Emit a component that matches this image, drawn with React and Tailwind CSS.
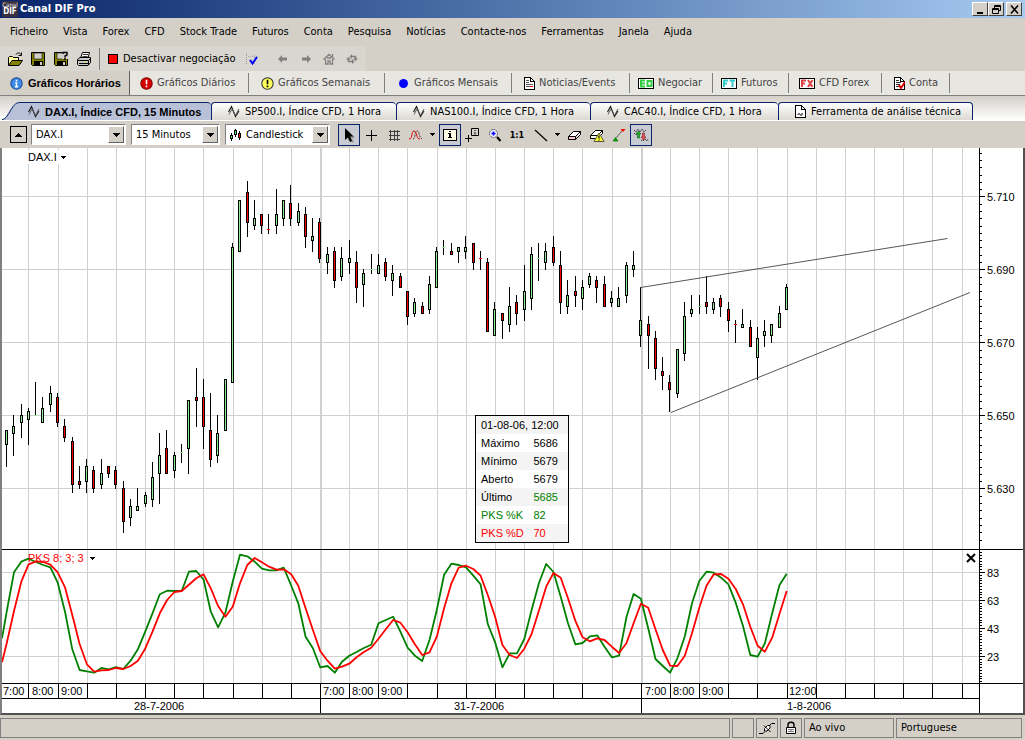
import { clsx } from "clsx";

const menu = [
  "Ficheiro", "Vista", "Forex", "CFD", "Stock Trade", "Futuros", "Conta",
  "Pesquisa", "Notícias", "Contacte-nos", "Ferramentas", "Janela", "Ajuda",
];

// [high, low, body top, body bottom, up], in points below 5670
const candles = [
  [24, 34, 24, 28, 1], [20, 31, 23, 25, 1], [17, 26, 20, 22, 1], [18, 28, 19, 21, 1],
  [11, 20, 20, 20, 1], [15, 22, 18, 22, 1], [12, 19, 14, 17, 1], [14, 23, 15, 22, 0],
  [21, 27, 23, 26, 0], [26, 41, 27, 39, 0], [34, 40, 38, 39, 0], [32, 41, 34, 38, 1],
  [34, 41, 35, 40, 0], [32, 40, 36, 39, 1], [34, 37, 34, 36, 0], [34, 40, 35, 39, 0],
  [38, 52, 40, 49, 0], [43, 50, 45, 48, 1], [40, 46, 45, 46, 1], [41, 45, 42, 44, 1],
  [33, 45, 37, 43, 1], [25, 44, 31, 36, 1], [24, 36, 29, 36, 0], [30, 37, 31, 35, 1],
  [28, 33, 30, 30, 1], [16, 36, 16, 29, 1], [7, 23, 15, 16, 0], [10, 29, 15, 23, 0],
  [14, 34, 24, 32, 0], [20, 33, 25, 31, 1], [10, 24, 10, 24, 1], [-27, 11, -26, 11, 1],
  [-39, -25, -39, -25, 1], [-44, -29, -41, -33, 0], [-39, -31, -34, -32, 1], [-35, -30, -35, -32, 0],
  [-35, -30, -31, -31, 0], [-42, -30, -35, -32, 1], [-39, -32, -39, -34, 1], [-43, -32, -38, -34, 0],
  [-38, -32, -36, -33, 1], [-37, -26, -35, -29, 0], [-34, -25, -29, -28, 1], [-34, -22, -33, -23, 0],
  [-26, -19, -24, -22, 1], [-26, -15, -25, -17, 0], [-26, -17, -23, -18, 1], [-28, -19, -23, -22, 1],
  [-25, -11, -22, -15, 0], [-20, -10, -19, -16, 1], [-24, -19, -20, -20, 1], [-24, -19, -21, -19, 1],
  [-23, -17, -22, -18, 0], [-21, -13, -19, -17, 1], [-19, -15, -18, -15, 0], [-14, -5, -14, -7, 0],
  [-12, -7, -11, -8, 1], [-11, -8, -10, -8, 0], [-18, -8, -16, -9, 1], [-26, -15, -25, -15, 1],
  [-28, -24, -26, -26, 1], [-27, -24, -25, -24, 0], [-26, -22, -26, -25, 1], [-29, -23, -26, -25, 1],
  [-27, -20, -27, -22, 0], [-25, -20, -23, -23, 0], [-23, -3, -22, -3, 0], [-11, -2, -9, -2, 1],
  [-8, -1, -8, -6, 0], [-15, -3, -10, -5, 1], [-13, -5, -11, -8, 0], [-21, -6, -14, -9, 1],
  [-26, -9, -24, -12, 1], [-27, -17, -23, -23, 1], [-27, -20, -25, -22, 1], [-29, -21, -26, -22, 0],
  [-25, -8, -21, -11, 0], [-17, -8, -13, -10, 1], [-18, -10, -14, -13, 0], [-17, -9, -15, -12, 1],
  [-19, -15, -18, -16, 1], [-18, -11, -17, -15, 0], [-18, -10, -16, -10, 0], [-14, -10, -12, -11, 1],
  [-15, -10, -12, -10, 1], [-22, -11, -21, -13, 1], [-25, -18, -21, -20, 1], [-15, 1, -6, -2, 1],
  [-7, 7, -5, -2, 0], [-3, 10, -1, 7, 0], [4, 13, 8, 9, 0], [9, 19, 11, 13, 0],
  [2, 15, 2, 14, 1], [-11, 5, -7, 3, 1], [-13, -7, -9, -8, 1], [-13, -8, -10, -10, 1],
  [-18, -8, -11, -10, 0], [-12, -8, -11, -9, 1], [-13, -7, -12, -10, 0], [-11, -3, -9, -6, 0],
  [-6, 0, -5, -5, 0], [-9, -4, -5, -4, 1], [-6, 1, -4, 1, 0], [-4, 10, -1, 4, 1],
  [-6, 1, -3, -2, 1], [-5, 0, -5, -2, 1], [-10, -4, -8, -4, 1], [-16, -9, -15, -9, 1],
];

// PKS lines, thirds of a pixel below the panel top
const pksK = [
  215, 97, 65, 56, 66, 75, 82, 128, 215, 328, 390, 394, 398, 384, 388, 381, 387, 362, 328, 275,
  220, 163, 152, 153, 153, 95, 93, 118, 215, 262, 218, 125, 44, 49, 65, 86, 91, 91, 83, 135,
  190, 290, 325, 382, 378, 398, 365, 347, 336, 324, 314, 250, 240, 230, 275, 323, 347, 363, 300, 210,
  104, 71, 75, 82, 107, 133, 252, 307, 382, 340, 340, 297, 210, 130, 72, 96, 170, 250, 313, 309,
  289, 286, 320, 352, 347, 232, 162, 176, 265, 357, 378, 398, 355, 290, 190, 123, 95, 98, 113, 133,
  188, 258, 345, 350, 310, 220, 136, 101,
];
const pksD = [
  310, 213, 125, 73, 64, 66, 74, 97, 142, 225, 312, 373, 395, 391, 390, 384, 387, 378, 362, 326,
  275, 220, 180, 156, 153, 134, 115, 103, 145, 198, 230, 200, 130, 75, 54, 67, 80, 89, 88, 102,
  137, 205, 270, 333, 362, 386, 380, 371, 352, 336, 323, 296, 268, 240, 248, 277, 313, 345, 337, 290,
  205, 130, 83, 77, 87, 107, 165, 230, 315, 345, 354, 326, 282, 212, 140, 99, 113, 175, 242, 292,
  304, 295, 300, 320, 339, 310, 250, 191, 203, 268, 330, 377, 378, 348, 280, 203, 137, 103, 102, 116,
  147, 193, 260, 317, 335, 293, 223, 153,
];

const candleX = (i) => Math.round(4 + i * 7.29);
const priceY = (d) => Math.round(194 + d * 3.65);
const hours = Array.from({ length: 33 }, (_, k) => Math.floor(26.9 + k * 29.16));
const toPoints = (list, first) =>
  `0,${392 + first / 3} ` +
  list.map((v, i) => `${(4.7 + i * 7.29).toFixed(1)},${(392 + v / 3).toFixed(1)}`).join(" ");

const Caret = ({ className }) => (
  <svg width="7" height="4" viewBox="0 0 7 4" shapeRendering="crispEdges" className={className} aria-hidden="true">
    <path d="M0 0h7v1H6v1H5v1H4v1H3V3H2V2H1V1H0z" fill="currentColor" />
  </svg>
);

const Icon = ({ children, size = 16, className }) => (
  <svg width={size} height={size} viewBox="0 0 16 16" fill="none" className={clsx("shrink-0", className)} aria-hidden="true">
    {children}
  </svg>
);

const FolderIcon = () => (
  <Icon>
    <path d="M1.5 14V6.500l1-1h3l1 1h5V9" fill="#ffff9c" stroke="#000" />
    <path d="M1.500 14.500 5 9.500h10.500L12 14.500z" fill="#848200" stroke="#000" />
    <path d="M9 3.500c1-2 4-2 5 0M14.500 1.500v3h-3" stroke="#000" />
  </Icon>
);

const DiskIcon = ({ ask }) => (
  <Icon>
    <path d="M1.500 1.500h13v13h-12l-1-1z" fill="#848200" stroke="#000" />
    <path d="M4 2h8v6H4z" fill="#d4d0c8" stroke="#000" strokeWidth=".6" />
    <path d="M4 10h9v4.500H4z" fill="#000" />
    <path d="M10 11h2v3h-2z" fill="#d4d0c8" />
    {ask && (
      <>
        <path d="M9 0h7v8H9z" fill="#d4d0c8" />
        <path d="M10 3V1.500h4V4l-2 1v1.500M11 8h2" stroke="#000" strokeWidth="1.400" />
      </>
    )}
  </Icon>
);

const PrinterIcon = () => (
  <Icon>
    <path d="M4.500 7 6.500 1.500h7L12 7" fill="#fff" stroke="#000" />
    <path d="M7 3.500h5M6.500 5.500h5" stroke="#000" strokeWidth=".8" />
    <path d="M1.500 8.500 4 6.500h10.500v5L12 14.500H2.500l-1-1z" fill="#c8c8c8" stroke="#000" />
    <path d="M1.500 9.500h11l2-2M3 12.500h9M12.500 10v4" stroke="#000" />
    <path d="M8 11h2" stroke="#e8e800" />
  </Icon>
);

const Badge = ({ fill, fg, stroke, info }) => (
  <Icon size={13}>
    <circle cx="8" cy="8" r="7" fill={fill} stroke={stroke} strokeWidth="1.300" />
    {info ? (
      <path d="M8 3.500v2M6.500 7.500H8V12M6 12h4" stroke={fg} strokeWidth="1.800" />
    ) : (
      <path d="M8 3.500v5.500M8 10.500v2" stroke={fg} strokeWidth="2" />
    )}
  </Icon>
);

const PageIcon = ({ children }) => (
  <svg width="11" height="13" viewBox="0 0 11 13" fill="none" shapeRendering="crispEdges" className="shrink-0" aria-hidden="true">
    <path d="M.5.500h6l4 4v8H.500z" fill="#fff" stroke="#000" />
    <path d="M6.500.500v4h4" stroke="#000" />
    {children}
  </svg>
);

const Ticket = ({ color, children }) => (
  <span className="flex h-[11px] w-4 items-center justify-center border border-black bg-white">
    <svg width="14" height="9" viewBox="0 0 14 9" fill="none" stroke={color} strokeWidth="2" aria-hidden="true">
      {children}
    </svg>
  </span>
);

const ZigzagIcon = () => (
  <svg width="12" height="13" viewBox="0 0 12 13" fill="none" className="shrink-0" aria-hidden="true">
    <path d="M.5 7 3.500 1.500l4 10L11 6" stroke="#111" strokeWidth="1.100" />
    <path d="M1 9.500 4 4l3.500 6.500L11 4" stroke="#555" />
  </svg>
);

const workspaces = [
  { label: "Gráficos Diários", width: "w-[119px] pl-2.5", icon: <Badge fill="#d40000" stroke="#800" fg="#fff" /> },
  { label: "Gráficos Semanais", width: "w-[136px] pl-3", icon: <Badge fill="#ffff60" stroke="#333" fg="#000" /> },
  {
    label: "Gráficos Mensais",
    width: "w-[127px] pl-3",
    icon: (
      <Icon size={13}>
        <circle cx="8" cy="8" r="5.500" fill="#00f" />
      </Icon>
    ),
  },
  {
    label: "Noticias/Events",
    width: "w-[118px] pl-3",
    icon: (
      <PageIcon>
        <path d="M2 3.500h3M2 5.500h3M2 7.500h7M2 9.500h4" stroke="#555" />
        <path d="M6 9.500h3" stroke="#e00" />
      </PageIcon>
    ),
  },
  {
    label: "Negociar",
    width: "w-[83px] pl-2",
    icon: (
      <Ticket color="#3c4">
        <path d="M6 1.500H2v6h4M2 4.500h4M8.500 2h4v5h-4z" />
      </Ticket>
    ),
  },
  {
    label: "Futuros",
    width: "w-[76px] pl-2",
    icon: (
      <Ticket color="#3cc">
        <path d="M6 1.500H2V8M2 4.500h3M7.500 1.500H13M10.500 1v7" />
      </Ticket>
    ),
  },
  {
    label: "CFD Forex",
    width: "w-[93px] pl-2.5",
    icon: (
      <Ticket color="#d44">
        <path d="M6 1.500H2V8M2 4.500h3M8 1l4.500 7M12.500 1 8 8" />
      </Ticket>
    ),
  },
  {
    label: "Conta",
    width: "w-[68px] pl-3",
    icon: (
      <PageIcon>
        <path d="M2 3.500h3M2 5.500h5M2 7.500h4M2 9.500h3" stroke="#333" />
        <path d="m5 8 2 3 4-6" stroke="#d00" strokeWidth="2" shapeRendering="auto" />
      </PageIcon>
    ),
  },
];

const documents = [
  { label: "SP500.I, Índice CFD, 1 Hora", width: "w-[185px]" },
  { label: "NAS100.I, Índice CFD, 1 Hora", width: "w-[194px]" },
  { label: "CAC40.I, Índice CFD, 1 Hora", width: "w-[188px]" },
  { label: "Ferramenta de análise técnica", width: "w-[195px]", page: true },
];

const WindowButton = ({ label, children }) => (
  <button
    type="button"
    aria-label={label}
    className="flex h-3.5 w-4 items-center justify-center border border-t-white border-r-[#404040] border-b-[#404040] border-l-white bg-[#d4d0c8]"
  >
    <svg width="13" height="12" viewBox="0 0 13 12" fill="none" aria-hidden="true">
      {children}
    </svg>
  </button>
);

const TitleBar = () => (
  <header className="flex h-[18px] items-center bg-linear-to-r from-[#0a246a] to-[#a6caf0] pr-[3px] pl-0.5">
    <span className="flex h-4 w-4 flex-col justify-center bg-[#3a3040] text-center text-[6px] leading-[6px] text-white">
      <span>Canal</span>
      <span className="text-[8px] leading-[8px] font-bold">DIF</span>
    </span>
    <h1 className="ml-0.5 grow text-[11px] font-bold text-white">Canal DIF Pro</h1>
    <WindowButton label="Minimizar">
      <path d="M3 9h6v2H3z" fill="#000" />
    </WindowButton>
    <WindowButton label="Restaurar">
      <path d="M4.500 5V2.500h6v5H8M4 3.500h7M2.500 5.500h6v5h-6zM2 6.500h7" stroke="#000" />
    </WindowButton>
    <span className="w-0.5" />
    <WindowButton label="Fechar">
      <path d="m3 2.500 7 8M10 2.500l-7 8" stroke="#000" strokeWidth="1.600" />
    </WindowButton>
  </header>
);

const MainToolbar = () => (
  <div className="flex h-[25px] w-[366px] items-center bg-[#d9d6cf] pl-[7px]">
    <button type="button" aria-label="Abrir"><FolderIcon /></button>
    <button type="button" aria-label="Guardar" className="ml-[7px]"><DiskIcon /></button>
    <button type="button" aria-label="Guardar como" className="ml-[7px]"><DiskIcon ask /></button>
    <button type="button" aria-label="Imprimir" className="ml-[7px]"><PrinterIcon /></button>
    <span className="ml-[7px] h-[22px] w-px bg-[#808080]" />
    <button type="button" className="ml-2 flex w-[137px] items-center gap-[5px] whitespace-nowrap">
      <span className="h-2.5 w-2.5 border border-black bg-[#f00]" />
      Desactivar negociação
    </button>
    <button type="button" aria-label="Validar">
      <Icon>
        <path d="M1.500 2v12" stroke="#999" strokeDasharray="1 1" />
        <path d="M3 5.500h10M9.500 4v9" stroke="#aaa" strokeDasharray="1 1" />
        <path d="m5 9 2.500 3.500L12 6" stroke="#00f" strokeWidth="2" />
      </Icon>
    </button>
    <div className="ml-3.5 flex items-center gap-[7px]">
      <button type="button" aria-label="Anterior">
        <Icon><path d="m3 8 4-4v2.500h5v3H7V12z" fill="#808080" /></Icon>
      </button>
      <button type="button" aria-label="Seguinte">
        <Icon><path d="M13 8 9 4v2.500H4v3h5V12z" fill="#808080" /></Icon>
      </button>
      <button type="button" aria-label="Início">
        <Icon><path d="m2.500 8.500 5.500-5 5.500 5M4.500 8v5h2.500v-3h2v3h2.500V8M6 7h4M11.500 3v3" stroke="#808080" strokeWidth="1.300" /></Icon>
      </button>
      <button type="button" aria-label="Actualizar">
        <Icon>
          <path d="M7 5.500h4.500V8M9 10.500H4.500V8" stroke="#808080" strokeWidth="1.600" />
          <path d="M9 7.500h5L11.500 10zM2 8.500h5L4.500 6zM8 3v5L5.500 5.500zM8 8v5l2.500-2.500z" fill="#808080" />
        </Icon>
      </button>
    </div>
  </div>
);

const WorkspaceTabs = () => (
  <nav className="flex h-[25px] border-b border-[#808080] bg-[#e8e6e1] text-[#444]">
    <a
      href="#horarios"
      className="flex w-[130px] items-center gap-[5px] border-r border-[#606060] bg-[#d4d0c8] pl-2.5 font-['Liberation_Sans',sans-serif] font-bold whitespace-nowrap text-black"
    >
      <Badge info fill="#3c8ce8" stroke="#1c4c98" fg="#fff" />
      Gráficos Horários
    </a>
    {workspaces.map((item) => (
      <a
        key={item.label}
        href="#ws"
        className={clsx("my-0.5 flex items-center gap-1 border-r border-[#808080] whitespace-nowrap", item.width)}
      >
        {item.icon}
        {item.label}
      </a>
    ))}
  </nav>
);

const DocumentTabs = () => (
  <nav className="flex h-[25px] items-end border-b border-white bg-linear-to-b from-[#d4d0c8] to-white pl-0.5">
    <svg width="18" height="18" viewBox="0 0 18 18" fill="none" aria-hidden="true">
      <path d="M0 18c5 0 8-17.500 18-17.500V18z" fill="#b8c1d8" />
      <path d="M0 17.500c3 0 5-3 8-8s5-9 10-9" stroke="#0a246a" />
    </svg>
    <a
      href="#dax"
      className="flex h-[18px] w-[191px] items-center gap-[5px] rounded-tr border-t border-[#0a246a] bg-[#b8c1d8] pl-2 font-['Liberation_Sans',sans-serif] font-bold whitespace-nowrap text-black"
    >
      <ZigzagIcon />
      DAX.I, Índice CFD, 15 Minutos
    </a>
    {documents.map((item) => (
      <a
        key={item.label}
        href="#doc"
        className={clsx(
          "flex h-[18px] items-center gap-[5px] rounded-t border-t border-l border-[#0a246a] bg-linear-to-b from-white to-[#dcd9d2] pl-4 whitespace-nowrap last:border-r",
          item.width,
        )}
      >
        {item.page ? (
          <PageIcon>
            <path d="M2 9.500h1v-1h1v1h1v1h1v-2h1v1h1" stroke="#777" />
          </PageIcon>
        ) : (
          <ZigzagIcon />
        )}
        {item.label}
      </a>
    ))}
  </nav>
);

const Combo = ({ label, value, className, children }) => (
  <div className={clsx("relative h-[21px] border border-t-[#808080] border-r-white border-b-white border-l-[#808080] bg-white", className)}>
    <select
      aria-label={label}
      className={clsx("h-full w-full appearance-none outline-none", children ? "pl-5" : "pl-1")}
    >
      <option>{value}</option>
    </select>
    {children}
    <span className="pointer-events-none absolute inset-y-px right-px flex w-4 items-center justify-center border border-t-white border-r-[#606060] border-b-[#606060] border-l-white bg-[#d4d0c8]">
      <Caret />
    </span>
  </div>
);

const Tool = ({ label, active, width = "w-[22px]", children }) => (
  <button
    type="button"
    aria-label={label}
    className={clsx(
      "flex h-[22px] items-center justify-center border",
      width,
      active ? "border-[#0a246a] bg-[#c9cbd2]" : "border-transparent",
    )}
  >
    {children}
  </button>
);

const ChartToolbar = () => (
  <div className="flex h-[27px] items-center pl-2.5">
    <button type="button" aria-label="Recolher" className="flex h-[17px] w-[17px] items-center justify-center border border-black">
      <Caret className="rotate-180" />
    </button>
    <Combo label="Símbolo" value="DAX.I" className="ml-1 w-[95px]" />
    <Combo label="Intervalo" value="15 Minutos" className="ml-[5px] w-[89px]" />
    <Combo label="Tipo" value="Candlestick" className="ml-[5px] w-[105px]">
      <svg width="12" height="12" viewBox="0 0 12 12" shapeRendering="crispEdges" className="pointer-events-none absolute top-1 left-1" aria-hidden="true">
        <path d="M1 4h1v8H1zM5 0h1v8H5zM9 2h1v9H9z" />
        <path d="M0 6h3v4H0zM4 1h3v5H4zM8 4h3v5H8z" />
        <path d="M1 7h1v2H1zM5 2h1v3H5z" fill="#6e6" />
        <path d="M9 5h1v3H9z" fill="#f00" />
      </svg>
    </Combo>
    <div className="ml-2 flex items-center">
      <Tool label="Seleccionar" active>
        <Icon>
          <path d="M7 3v11l2-2 2 4 2-1-2-4h3z" fill="#999" />
          <path d="M4 1v12l3-2.500 2 4.500 2-1-2-4.500h3.500z" fill="#000" />
        </Icon>
      </Tool>
      <Tool label="Cruz"><Icon><path d="M8.500 3v11M3 8.500h11" stroke="#000" /></Icon></Tool>
      <Tool label="Grelha"><Icon><path d="M5.500 3v11M9.500 3v11M12.500 3v11M4 4.500h11M4 8.500h11M4 12.500h11" stroke="#333" strokeWidth=".9" /></Icon></Tool>
      <Tool label="Indicadores">
        <Icon>
          <path d="M2 12c4 0 2-8 5-8s2 8 6 8" stroke="#d00" />
          <path d="M6 12c3 0 1-8 4-8s1 5 5 8" stroke="#633" strokeDasharray="2 1" />
        </Icon>
      </Tool>
      <Tool label="Mais indicadores" width="w-[13px]"><Caret className="h-[3px] w-[5px]" /></Tool>
      <Tool label="Informação" active>
        <svg width="14" height="12" viewBox="0 0 14 12" fill="none" shapeRendering="crispEdges" aria-hidden="true">
          <path d="M.5.500h13v11H.500z" fill="#ffffe8" stroke="#000" />
          <path d="M6 2h2v1H6zM5 4h3v4h1v1H5V8h1V5H5z" fill="#000" />
        </svg>
      </Tool>
      <Tool label="Etiqueta">
        <Icon>
          <path d="M7.500 1.500h7v7h-7zM4.500 8v7M1 11.500h7" stroke="#000" />
          <path d="M10.500 3h1v1h-1zM10.500 5h1v2.500h-1z" fill="#000" />
        </Icon>
      </Tool>
      <Tool label="Ampliar">
        <Icon>
          <circle cx="7.500" cy="6.500" r="4" fill="#eef" stroke="#555" strokeDasharray="2 .6" />
          <path d="M7.500 4.500v4M5.500 6.500h4" stroke="#00f" strokeWidth="1.500" />
          <path d="m11 10 3.500 4" stroke="#000" strokeWidth="2" />
        </Icon>
      </Tool>
      <Tool label="Escala real" width="w-6"><span className="text-[9px] font-bold">1:1</span></Tool>
      <Tool label="Linha"><Icon><path d="m3 3 12 11" stroke="#000" strokeWidth="1.200" /></Icon></Tool>
      <Tool label="Mais linhas" width="w-[13px]"><Caret className="h-[3px] w-[5px]" /></Tool>
      <Tool label="Apagar">
        <Icon>
          <path d="m1.500 9.500 5-5h7l-5 5zM1.500 9.500v3h7v-3M8.500 12.500l5-5v-3" fill="#fff" stroke="#000" />
          <path d="M2 10h6v2H2z" fill="#f8c8d8" />
        </Icon>
      </Tool>
      <Tool label="Apagar tudo">
        <Icon>
          <path d="m1.500 8.500 5-5h7l-5 5zM1.500 8.500v3h7v-3M8.500 11.500l5-5v-3" fill="#fff" stroke="#000" />
          <path d="m10 6 5 8.500H5z" fill="#ffff30" stroke="#554" />
          <path d="M10 8.500v3M10 12.500v1" stroke="#000" strokeWidth="1.200" />
        </Icon>
      </Tool>
      <Tool label="Tendência">
        <Icon>
          <path d="m4 12 8-9" stroke="#333" strokeDasharray="2 .8" />
          <path d="M9.500 2h5L12 5z" fill="#f00" />
          <path d="M2 14h5l-2.500-3.500z" fill="#0a0" stroke="#060" strokeWidth=".6" />
        </Icon>
      </Tool>
      <Tool label="Posições" active>
        <Icon>
          <path d="m1 3 2 2 2-3 2 3 2-3 2 3 2-2M1 6l2 2 2-3M8 13l2 1 2-2 2 2 1-2" stroke="#333" strokeDasharray="1.500 .8" />
          <path d="m5.500 4 2.500 3H6.500v4h-2V7H3z" fill="#2b2" stroke="#040" strokeWidth=".5" />
          <path d="m10.500 13 2.500-3h-1.500V6h-2v4H8z" fill="#e55" stroke="#600" strokeWidth=".5" />
        </Icon>
      </Tool>
    </div>
  </div>
);

const Plot = () => (
  <svg className="h-full w-full" fontSize="11" role="img" aria-label="DAX.I, 15 Minutos">
    <g shapeRendering="crispEdges">
      {hours.map((x, k) => (
        <rect key={x} x={x} y="0" width={k === 10 || k === 21 ? 2 : 1} height="535" fill="#d0d0d0" />
      ))}
      {[48, 121, 194, 267, 340, 424, 452, 480, 508].map((y) => (
        <rect key={y} x="0" y={y} width="100%" height="1" fill="#d0d0d0" />
      ))}
      {candles.map(([high, low, top, bottom, up], i) => {
        const x = candleX(i);
        const flat = top === bottom;
        const h = priceY(bottom) - priceY(top);
        return (
          <g key={i}>
            <rect x={x} y={priceY(high)} width="1" height={priceY(low) - priceY(high) + 1} />
            {flat ? (
              <rect x={x - 1} y={priceY(top)} width="3" height="1" fill={up ? "#90ee90" : "#f00"} />
            ) : (
              <>
                <rect x={x - 1} y={priceY(top)} width="3" height={h + 1} />
                <rect x={x} y={priceY(top) + 1} width="1" height={h - 1} fill={up ? "#90ee90" : "#f00"} />
              </>
            )}
          </g>
        );
      })}
    </g>
    <path d="M638.500 139.500 945.500 90.500M669 264.500 968 144.500" stroke="#444" strokeWidth=".9" fill="none" />
    <g fill="none" strokeWidth="1.800" strokeLinejoin="round">
      <polyline points={toPoints(pksK, 295)} stroke="#008000" />
      <polyline points={toPoints(pksD, 367)} stroke="#f00" />
    </g>
    <g shapeRendering="crispEdges">
      <rect x="0" y="401" width="100%" height="1" />
      <rect x="0" y="535" width="100%" height="1" />
      <rect x="0" y="550" width="100%" height="1" />
      {hours.map((x, k) => (
        <rect key={x} x={x} y="535" width="1" height={k === 10 || k === 21 ? 30 : 15} />
      ))}
    </g>
    {[
      [1, "7:00"], [30, "8:00"], [59, "9:00"], [321, "7:00"], [350, "8:00"], [379, "9:00"],
      [643, "7:00"], [671, "8:00"], [700, "9:00"], [787, "12:00"],
    ].map(([x, text]) => (
      <text key={x} x={x} y="547">{text}</text>
    ))}
    <text x="132" y="562">28-7-2006</text>
    <text x="452" y="562">31-7-2006</text>
    <text x="785" y="562">1-8-2006</text>
  </svg>
);

const Scale = () => (
  <svg className="h-[565px] w-11 shrink-0" fontSize="11" aria-hidden="true">
    <g shapeRendering="crispEdges">
      <rect x="0" y="0" width="1" height="565" />
      <rect x="0" y="401" width="100%" height="1" />
      <rect x="0" y="535" width="100%" height="1" />
      {Array.from({ length: 54 }, (_, i) => (
        <rect key={i} x="1" y={Math.round(4.600 + i * 7.3)} width="2" height="1" />
      ))}
      {Array.from({ length: 47 }, (_, i) => (
        <rect key={i} x="1" y={Math.round(404.400 + i * 2.8)} width="2" height="1" />
      ))}
      {[48, 121, 194, 267, 340, 424, 452, 480, 508].map((y) => (
        <rect key={y} x="1" y={y} width="5" height="1" />
      ))}
    </g>
    {["5.710", "5.690", "5.670", "5.650", "5.630"].map((text, i) => (
      <text key={text} x="8" y={53 + i * 73}>{text}</text>
    ))}
    {["83", "63", "43", "23"].map((text, i) => (
      <text key={text} x="8" y={429 + i * 28}>{text}</text>
    ))}
  </svg>
);

const quote = [
  ["Máximo", "5686"],
  ["Mínimo", "5679"],
  ["Aberto", "5679"],
  ["Último", "5685", "", "text-[#008000]"],
  ["PKS %K", "82", "text-[#008000]", "text-[#008000]"],
  ["PKS %D", "70", "text-[#f00]", "text-[#f00]"],
];

const QuoteBox = () => (
  <table className="absolute top-[267px] left-[473px] h-32 w-[94px] border border-black bg-white">
    <tbody>
      <tr className="bg-[#f4f4f4]">
        <td colSpan={2} className="pl-[5px] whitespace-nowrap">01-08-06, 12:00</td>
      </tr>
      {quote.map(([name, value, nameColor, valueColor]) => (
        <tr key={name} className="even:bg-white odd:bg-[#f4f4f4]">
          <th scope="row" className={clsx("w-[58px] pl-[5px] text-left font-normal whitespace-nowrap", nameColor)}>{name}</th>
          <td className={valueColor}>{value}</td>
        </tr>
      ))}
    </tbody>
  </table>
);

const Chart = () => (
  <main className="flex border-r-2 border-b-2 border-l-2 border-r-[#505050] border-b-[#505050] border-l-[#808080] bg-white font-['Liberation_Sans',Arial,sans-serif] text-[11px] leading-[14px]">
    <div className="relative h-[565px] min-w-0 grow">
      <Plot />
      <button type="button" className="absolute top-0.5 left-[26px] flex items-center gap-1 bg-white pr-2">
        DAX.I
        <Caret className="h-[3px] w-[5px]" />
      </button>
      <button type="button" className="absolute top-[403px] left-[26px] flex items-center gap-1.5 text-[#f00]">
        PKS 8; 3; 3
        <Caret className="h-[3px] w-[5px] text-black" />
      </button>
      <button type="button" aria-label="Fechar painel" className="absolute top-[405px] right-[3px]">
        <svg width="10" height="10" viewBox="0 0 10 10" aria-hidden="true">
          <path d="m1 1 8 8M9 1 1 9" stroke="#000" strokeWidth="2" />
        </svg>
      </button>
      <QuoteBox />
    </div>
    <Scale />
  </main>
);

const StatusBar = () => (
  <footer className="mt-[3px] flex h-5 gap-0.5 pr-[3px]">
    <div className="grow border border-[#808080]" />
    <div className="w-[22px] border border-[#808080]" />
    <div className="flex w-[22px] items-center justify-center border border-[#808080]">
      <Icon>
        <path d="M0 13.500h4l2-2M11 5l1.500-1.500H16" stroke="#000" />
        <path d="M5.500 11V8.500l3-3H11V8l-3 3z" fill="#fff" stroke="#000" />
        <path d="m5 5.500 6.500 6.500" stroke="#000" />
      </Icon>
    </div>
    <div className="flex w-[22px] items-center justify-center border border-[#808080]">
      <Icon>
        <path d="M5 8V4.500C5 1.500 11 1.500 11 4.500V8" stroke="#000" strokeWidth="1.400" />
        <path d="M3.500 7.500h9v6h-9z" fill="#fff" stroke="#000" />
        <path d="M8 9v3M5 9.500h6M5 11.500h6" stroke="#777" />
      </Icon>
    </div>
    <div className="flex w-[90px] items-center border border-[#808080] pl-1">Ao vivo</div>
    <div className="flex w-[126px] items-center border border-[#808080] pl-1">Portuguese</div>
  </footer>
);

const App = () => {
  return (
    <div className="min-h-screen bg-[#d4d0c8] font-['DejaVu_Sans_Condensed','DejaVu_Sans',Tahoma,sans-serif] text-[11px] leading-[14px] text-black">
      <TitleBar />
      <nav className="flex h-7 items-center gap-[15px] pl-2.5">
        {menu.map((item) => (
          <a key={item} href="#menu" className="whitespace-nowrap">{item}</a>
        ))}
      </nav>
      <MainToolbar />
      <WorkspaceTabs />
      <DocumentTabs />
      <ChartToolbar />
      <Chart />
      <StatusBar />
    </div>
  );
};

export default App;
